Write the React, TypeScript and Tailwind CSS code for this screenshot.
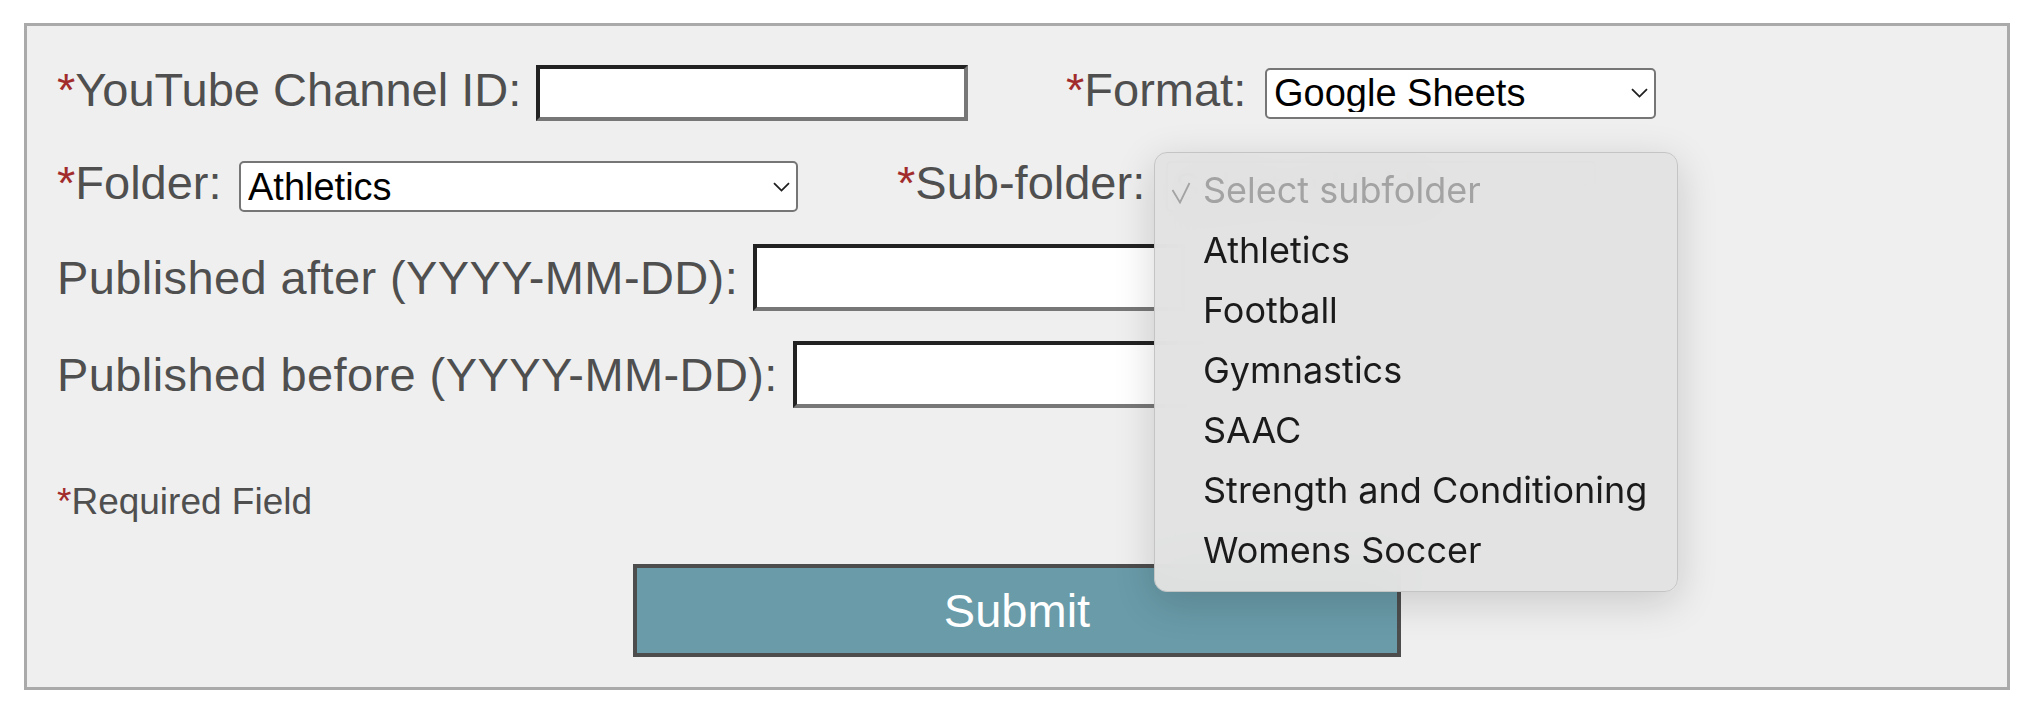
import React from 'react';

const labelCls = "shrink-0 whitespace-nowrap text-[47px] leading-none text-[#4f4f4f] font-['Liberation_Sans',Arial,sans-serif]";
const inputCls = "block bg-white border-[4px] border-t-[#222222] border-l-[#222222] border-b-[#777777] border-r-[#777777] outline-none";

function Star() {
  return <span className="text-[#a22c2c]">*</span>;
}

function Chevron() {
  return (
    <svg width="17" height="10" viewBox="0 0 17 10" className="pointer-events-none absolute right-[8px] top-1/2 -translate-y-1/2">
      <path d="M1 1.2 L8.5 8.6 L16 1.2" fill="none" stroke="#1f1f1f" strokeWidth="1.8" />
    </svg>
  );
}

function Select({ width, value, options }: { width: string; value: string; options: string[] }) {
  return (
    <div className={`relative shrink-0 ${width}`}>
      <select
        defaultValue={value}
        className="block h-[51px] w-full appearance-none rounded-[5px] border-2 border-[#767676] bg-white pl-[7px] text-[38px] leading-none text-black outline-none font-['Liberation_Sans',Arial,sans-serif]"
      >
        {options.map((o) => (
          <option key={o}>{o}</option>
        ))}
      </select>
      <Chevron />
    </div>
  );
}

const subfolders = ['Athletics', 'Football', 'Gymnastics', 'SAAC', 'Strength and Conditioning', 'Womens Soccer'];

function SubfolderMenu() {
  return (
    <div className="absolute left-[1127px] top-[126px] w-[524px] h-[440px] rounded-[13px] border border-[#c4c4c4] bg-[rgba(225,226,225,0.97)] backdrop-blur-xl shadow-[0_10px_40px_rgba(0,0,0,0.16)] pt-[7px] font-['Inter',sans-serif] text-[36px] leading-[60px]">
      <div className="flex h-[60px]">
        <div className="w-[48px] shrink-0 pl-[16px] pt-[22px]">
          <svg width="20" height="22" viewBox="0 0 20 22">
            <path d="M1.5 8 L9 20.5 L18.5 1" fill="none" stroke="#a3a3a3" strokeWidth="1.8" />
          </svg>
        </div>
        <span className="text-[#a3a3a3]">Select subfolder</span>
      </div>
      {subfolders.map((s) => (
        <div key={s} className="flex h-[60px]">
          <div className="w-[48px] shrink-0" />
          <span className="text-[#1b1b1b] whitespace-nowrap">{s}</span>
        </div>
      ))}
    </div>
  );
}

export default function App() {
  return (
    <div className="min-h-screen bg-white pt-[23px] pl-[24px]">
      <form className="relative w-[1986px] border-[3px] border-[#aaaaaa] bg-[#efefef] px-[30px] pt-[39px] pb-[30px]">
        <div className="flex h-[56px] items-center">
          <label className={`${labelCls} w-[479px] mb-[8px]`}>
            <Star />YouTube Channel ID:
          </label>
          <input type="text" className={`${inputCls} w-[432px] h-[56px]`} />
          <label className={`${labelCls} ml-[98px] w-[199px] mb-[8px]`}>
            <Star />Format:
          </label>
          <Select width="w-[391px]" value="Google Sheets" options={['Google Sheets', 'CSV', 'Excel']} />
        </div>

        <div className="mt-[40px] flex h-[51px] items-center">
          <label className={`${labelCls} w-[182px] mb-[8px]`}>
            <Star />Folder:
          </label>
          <Select width="w-[559px]" value="Athletics" options={['Athletics']} />
          <label className={`${labelCls} ml-[99px] w-[269px] mb-[8px]`}>
            <Star />Sub-folder:
          </label>
          <Select width="w-[430px]" value="Select subfolder" options={['Select subfolder', ...subfolders]} />
        </div>

        <div className="mt-[32px] flex h-[67px] items-center">
          <label className={`${labelCls} w-[696px] tracking-[0.4px]`}>Published after (YYYY-MM-DD):</label>
          <input type="text" className={`${inputCls} w-[432px] h-[67px]`} />
        </div>

        <div className="mt-[30px] flex h-[67px] items-center">
          <label className={`${labelCls} w-[736px] tracking-[0.4px]`}>Published before (YYYY-MM-DD):</label>
          <input type="text" className={`${inputCls} w-[432px] h-[67px]`} />
        </div>

        <p className="mt-[75px] text-[37px] leading-none text-[#4f4f4f] font-['Liberation_Sans',Arial,sans-serif]">
          <Star />Required Field
        </p>

        <button
          type="button"
          className="mx-auto mt-[44px] block h-[93px] w-[768px] border-[4px] border-[#4d4d4d] bg-[#699ba8] text-[47px] leading-none text-white font-['Liberation_Sans',Arial,sans-serif]"
        >
          Submit
        </button>

        <SubfolderMenu />
      </form>
    </div>
  );
}
